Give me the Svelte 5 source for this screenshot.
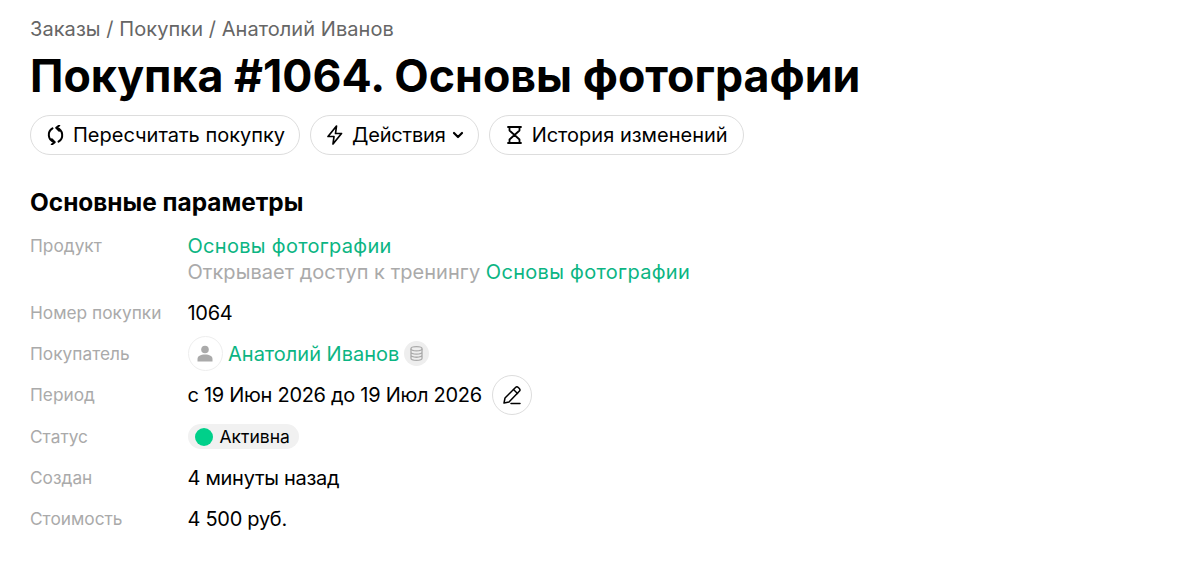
<script>
  const rows = [
    { label: 'Номер покупки', value: '1064' },
  ];
</script>

<div class="page">
  <div class="crumbs">Заказы / Покупки / Анатолий Иванов</div>
  <h1>Покупка #1064. Основы фотографии</h1>
  <div class="actions">
    <button class="recount">
      <svg width="20" height="20" viewBox="0 0 20 20" fill="none" stroke="#000" stroke-width="2" stroke-linecap="round" stroke-linejoin="round">
        <path d="M6.500 3.400a7.500 7.500 0 0 0 1.500 13.600" />
        <path d="M12.500 16.600a7.500 7.500 0 0 0-1.500-13.600" />
        <path d="M5.800 14.200l3 2.900-3 2.400" />
        <path d="M13.200 5.800l-3-2.900 3-2.400" />
      </svg>
      Пересчитать покупку
    </button>
    <button class="menu">
      <svg width="20" height="20" viewBox="0 0 20 20" fill="none" stroke="#000" stroke-width="1.7" stroke-linejoin="round">
        <path d="M10.500 1L2 11.500h6L7 19l8.500-10.500h-6z" />
      </svg>
      Действия
      <svg width="12" height="12" viewBox="0 0 12 12" fill="none" stroke="#000" stroke-width="2.200" stroke-linecap="round" stroke-linejoin="round">
        <path d="M2 4l4 4 4-4" />
      </svg>
    </button>
    <button>
      <svg width="20" height="20" viewBox="0 0 20 20" fill="none" stroke="#000" stroke-width="1.800" stroke-linecap="round" stroke-linejoin="round">
        <path d="M3 2h13M3 18h13M4.500 2v3.500L9.500 10l5-4.500V2M4.500 18v-3.500L9.500 10l5 4.500V18" />
      </svg>
      История изменений
    </button>
  </div>

  <h2>Основные параметры</h2>

  <div class="params">
    <div class="label first">Продукт</div>
    <div class="value first">
      <div><span class="link">Основы фотографии</span></div>
      <div class="muted">Открывает доступ к тренингу <span class="link">Основы фотографии</span></div>
    </div>

    {#each rows as row}
      <div class="label">{row.label}</div>
      <div class="value plain">{row.value}</div>
    {/each}

    <div class="label">Покупатель</div>
    <div class="value">
      <span class="avatar">
        <svg width="20" height="20" viewBox="0 0 20 20" fill="#aaa">
          <circle cx="10" cy="5.500" r="3.800" />
          <path d="M2.500 17.500v-2.500c0-3 3-4.500 7.500-4.500s7.500 1.500 7.500 4.500v2.500z" />
        </svg>
      </span>
      <span class="link name">Анатолий Иванов</span>
      <span class="db">
        <svg width="17" height="17" viewBox="0 0 20 20" fill="none" stroke="#aaa" stroke-width="1.500">
          <ellipse cx="10" cy="4.500" rx="6.500" ry="2.500" />
          <path d="M3.500 4.500v11c0 1.400 2.900 2.500 6.500 2.500s6.500-1.100 6.500-2.500v-11M3.500 8.200c0 1.400 2.900 2.500 6.500 2.500s6.500-1.100 6.500-2.500M3.500 11.900c0 1.400 2.900 2.500 6.500 2.500s6.500-1.100 6.500-2.500" />
        </svg>
      </span>
    </div>

    <div class="label tall">Период</div>
    <div class="value tall plain">
      с 19 Июн 2026 до 19 Июл 2026
      <span class="edit">
        <svg width="22" height="22" viewBox="0 0 22 22" fill="none" stroke="#000" stroke-width="1.500" stroke-linecap="round" stroke-linejoin="round">
          <path d="M3 19l1-5L14.500 3.500a2 2 0 0 1 2.800 0l1 1a2 2 0 0 1 0 2.800L8 18z" />
          <path d="M12.500 5.500l4 4" />
          <path d="M10 19.500h9" />
        </svg>
      </span>
    </div>

    <div class="label">Статус</div>
    <div class="value">
      <span class="status"><i></i>Активна</span>
    </div>

    <div class="label">Создан</div>
    <div class="value plain">4 минуты назад</div>

    <div class="label">Стоимость</div>
    <div class="value plain">4 500 руб.</div>
  </div>
</div>

<style>
  :global(body) {
    margin: 0;
    background: #fff;
    font-family: "Inter", "Noto Sans", sans-serif;
    color: #000;
  }

  .page {
    padding: 17px 30px 0;
  }

  .crumbs {
    font-size: 20px;
    line-height: 24px;
    letter-spacing: 0.06px;
    color: #666;
  }

  h1 {
    margin: 8px 0 12px;
    font-size: 44.7px;
    line-height: 54px;
    font-weight: 700;
  }

  .actions {
    display: flex;
    gap: 10px;
  }

  button {
    display: flex;
    align-items: center;
    gap: 7px;
    height: 40px;
    padding: 0 15px;
    border: 1px solid #ddd;
    border-radius: 20px;
    background: #fff;
    color: #000;
    font: inherit;
    font-size: 20px;
  }

  .recount {
    padding-right: 14px;
  }

  .menu {
    gap: 6px;
    padding-right: 14px;
    letter-spacing: -0.2px;
  }

  h2 {
    margin: 32px 0 8px;
    font-size: 24.4px;
    line-height: 30px;
    font-weight: 700;
  }

  .params {
    display: grid;
    grid-template-columns: 157.5px 1fr;
    font-size: 20px;
    line-height: 26px;
  }

  .label,
  .value {
    display: flex;
    align-items: center;
    min-height: 41px;
  }

  .tall {
    min-height: 42px;
  }

  .plain {
    letter-spacing: -0.29px;
  }

  .label {
    color: #aaa;
    font-size: 17.3px;
  }

  .label.first {
    align-items: flex-start;
    padding-top: 8px;
  }

  .value.first {
    display: block;
    padding: 8px 0 7px;
  }

  .link {
    color: #0bb583;
  }

  .first .link:first-child {
    letter-spacing: 0.3px;
  }

  .muted {
    color: #aaa;
    letter-spacing: 0.03px;
  }

  .name {
    margin-left: 5.5px;
  }

  .avatar {
    display: flex;
    align-items: center;
    justify-content: center;
    width: 35px;
    height: 35px;
    border: 1px solid #eee;
    border-radius: 50%;
    box-sizing: border-box;
  }

  .db {
    display: flex;
    align-items: center;
    justify-content: center;
    width: 25px;
    height: 25px;
    margin-left: 5px;
    border-radius: 50%;
    background: #eee;
  }

  .edit {
    display: flex;
    align-items: center;
    justify-content: center;
    width: 40px;
    height: 40px;
    margin-left: 10px;
    border: 1px solid #ddd;
    border-radius: 50%;
    box-sizing: border-box;
  }

  .status {
    display: inline-flex;
    align-items: center;
    gap: 7px;
    height: 25px;
    padding: 0 9px 0 7px;
    border-radius: 13px;
    background: #f1f1f1;
    font-size: 17.5px;
  }

  .status i {
    width: 18px;
    height: 18px;
    border-radius: 50%;
    background: #00d08a;
  }
</style>
